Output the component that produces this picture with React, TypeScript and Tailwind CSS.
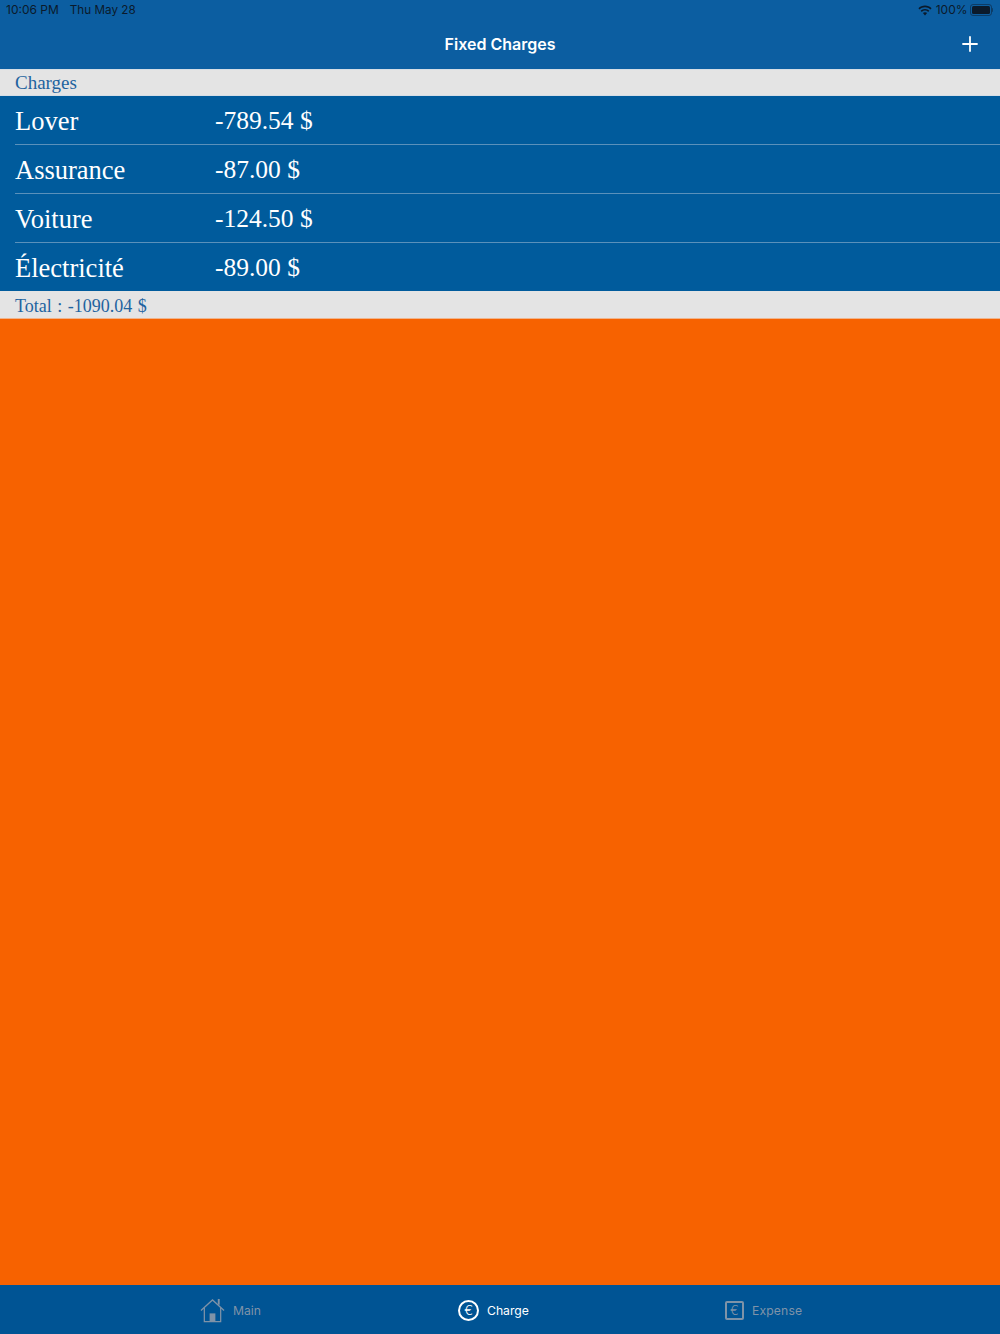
import { Plus } from 'lucide-react';

const charges = [
  { id: 'lover', label: 'Lover', amount: '-789.54 $' },
  { id: 'assurance', label: 'Assurance', amount: '-87.00 $' },
  { id: 'voiture', label: 'Voiture', amount: '-124.50 $' },
  { id: 'electricite', label: 'Électricité', amount: '-89.00 $' },
];

function HomeIcon() {
  return (
    <svg width="25" height="25" viewBox="0 0 26 26" fill="none" stroke="#7f93a8" strokeWidth="1.3">
      <path d="M1 13 13 2l12 11" />
      <path d="M4.5 10.500v14h17v-14" />
      <path d="M19.500 7V1" strokeWidth="2" />
      <rect x="10" y="16" width="6" height="8.500" fill="#7f93a8" stroke="none" />
    </svg>
  );
}

function StatusBar() {
  return (
    <div className="flex h-5 items-center justify-between pl-[6px] pr-[7px] text-[12px] text-[#0b1a2b]">
      <div className="flex items-baseline gap-[11px]">
        <span>10:06 PM</span>
        <span className="text-[11.7px]">Thu May 28</span>
      </div>
      <div className="flex items-center gap-[4px]">
        <svg width="14" height="11" viewBox="0 0 14 11" fill="#0b1a2b">
          <path d="M7 0.5C4.4 0.5 2.1 1.5 0.4 3.2l1.2 1.2C3 3 4.900 2.200 7 2.200s4 .8 5.400 2.200l1.200-1.200C11.900 1.500 9.600.5 7 .5z" />
          <path d="M7 3.900c-1.700 0-3.200.7-4.300 1.800l1.200 1.200C4.700 6.100 5.800 5.600 7 5.600s2.300.5 3.100 1.300l1.200-1.200C10.200 4.600 8.700 3.900 7 3.900z" />
          <path d="M7 7.200c-.9 0-1.600.4-2.100.9L7 10.500l2.100-2.400C8.600 7.600 7.900 7.200 7 7.200z" />
        </svg>
        <span>100%</span>
        <div className="-ml-[2px] flex items-center">
          <div className="h-[12px] w-[22px] rounded-[3px] border border-[#0b1a2b]/50 p-[1px]">
            <div className="h-full w-full rounded-[1.5px] bg-[#0b1a2b]" />
          </div>
          <div className="h-[4px] w-[1.5px] rounded-r-sm bg-[#0b1a2b]/50" />
        </div>
      </div>
    </div>
  );
}

export default function App() {
  return (
    <div className="flex h-screen flex-col bg-[#f76200] font-['Inter','Liberation_Sans',sans-serif]">
      {/* Nav bar */}
      <header className="h-[69px] shrink-0 bg-[#0c5ea1]">
        <StatusBar />
        <div className="relative flex h-[47px] items-center justify-center">
          <h1 className="text-[16px] font-semibold text-white">Fixed Charges</h1>
          <Plus className="absolute right-[18px] top-[12px] text-white" size={24} strokeWidth={1.8} absoluteStrokeWidth />
        </div>
      </header>

      {/* Charges list */}
      <div className="font-['Liberation_Serif',serif]">
        <div className="flex h-[27px] items-center border-y border-[#d5dde5] bg-[#e4e4e4] pl-[15px] pt-[2px] text-[19px] text-[#1f639f]">
          Charges
        </div>
        {charges.map((charge, i) => (
          <div
            key={charge.id}
            className={`bg-[#005b9c] pl-[15px] ${i < charges.length - 1 ? 'h-[49px]' : 'h-[48px]'}`}
          >
            <div
              className={`flex h-full items-center pt-[3px] text-white ${
                i < charges.length - 1 ? 'border-b border-[#5a91bb]' : ''
              }`}
            >
              <span className="w-[200px] text-[26.5px]">{charge.label}</span>
              <span className="text-[25.5px]">{charge.amount}</span>
            </div>
          </div>
        ))}
        <div className="flex h-[28px] items-center border-b border-[#f0b48c] bg-[#e4e4e4] pl-[15px] pt-[3px] text-[18px] text-[#1f639f]">
          <span className="[word-spacing:1px]">Total : -1090.04 $</span>
        </div>
      </div>

      <main className="flex-1" />

      {/* Tab bar */}
      <nav className="flex h-[49px] shrink-0 items-center bg-[#005494] pt-[2px] text-[12.2px] text-[#7f93a8]">
        <div className="ml-[200px] flex items-center gap-[8px]">
          <HomeIcon />
          <span className="mt-[1px]">Main</span>
        </div>
        <div className="ml-[197px] flex items-center gap-[8px] text-white">
          <div className="flex h-[21px] w-[21px] items-center justify-center rounded-full border-2 border-white text-[13px] font-light">
            €
          </div>
          <span className="mt-[1px]">Charge</span>
        </div>
        <div className="ml-[196px] flex items-center gap-[8px]">
          <div className="flex h-[19px] w-[19px] items-center justify-center rounded-[2px] border-2 border-[#7f93a8] text-[13px] font-light">
            €
          </div>
          <span className="mt-[1px] tracking-[0.15px]">Expense</span>
        </div>
      </nav>
    </div>
  );
}
